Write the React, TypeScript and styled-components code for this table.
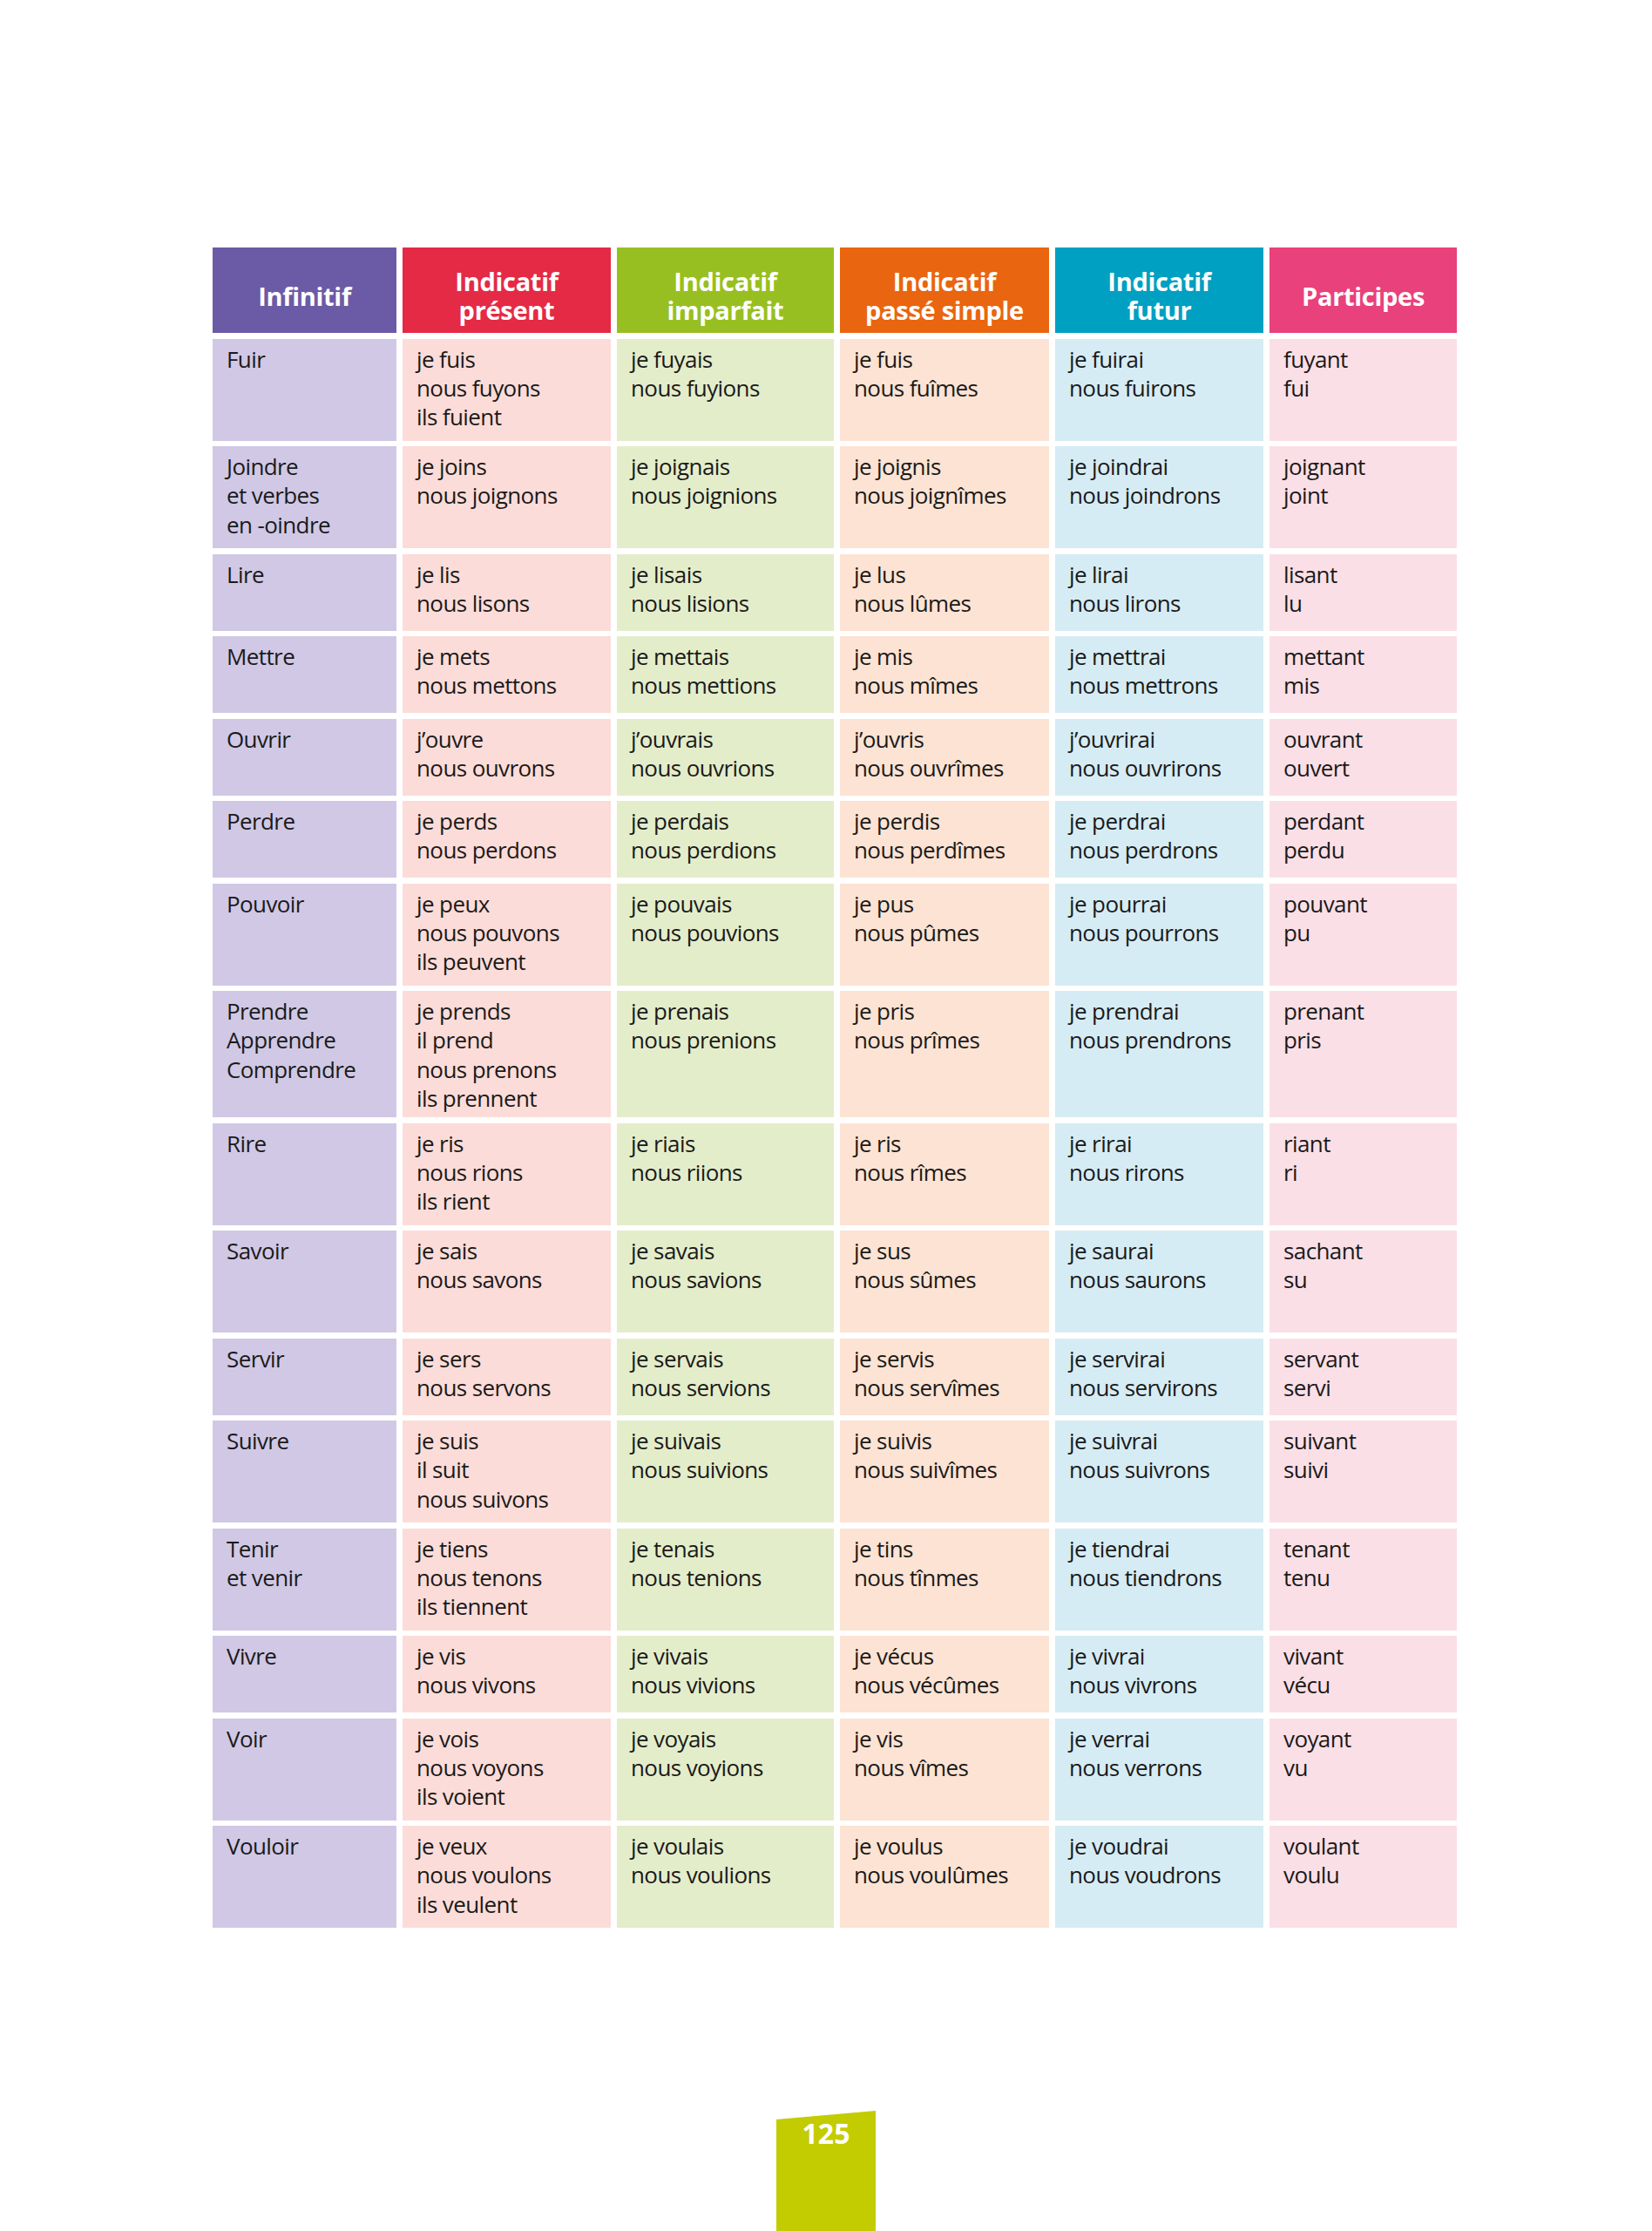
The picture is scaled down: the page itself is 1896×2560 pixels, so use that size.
import React from "react";
import styled, { createGlobalStyle } from "styled-components";

const GlobalStyle = createGlobalStyle`
  html, body {
    margin: 0;
    padding: 0;
    background: #ffffff;
  }
  body {
    font-family: "Open Sans", "Noto Sans", "Liberation Sans", sans-serif;
    color: #1a1a1a;
  }
`;

const COLS = "211px 239px 249px 240px 239px 215px";

const Page = styled.div`
  width: 1896px;
  height: 2560px;
  box-sizing: border-box;
  padding-top: 284px;
  display: flex;
  flex-direction: column;
  overflow: hidden;
`;

const Table = styled.div`
  margin-left: 244px;
  display: flex;
  flex-direction: column;
  gap: 6.5px;
  width: 1428px;
`;

const Row = styled.div<{ $h: number }>`
  display: grid;
  grid-template-columns: ${COLS};
  column-gap: 7px;
  height: ${(p) => p.$h}px;
`;

const HeadCell = styled.div<{ $bg: string }>`
  background: ${(p) => p.$bg};
  color: #ffffff;
  font-weight: 700;
  font-size: 29px;
  line-height: 33px;
  letter-spacing: -0.3px;
  text-align: center;
  display: flex;
  align-items: center;
  justify-content: center;
  padding-top: 12px;
  box-sizing: border-box;
  white-space: nowrap;
`;

const Cell = styled.div<{ $bg: string }>`
  background: ${(p) => p.$bg};
  font-size: 26px;
  line-height: 33.3px;
  letter-spacing: -0.6px;
  padding: 7px 8px 0 16px;
  box-sizing: border-box;
  color: #1a1a1a;
  overflow: hidden;
  white-space: nowrap;
`;

const Footer = styled.div`
  margin-top: auto;
  display: flex;
  justify-content: center;
`;

const PageTab = styled.div`
  width: 114px;
  height: 138px;
  background: #c3cc00;
  clip-path: polygon(0 10px, 100% 0, 100% 100%, 0 100%);
  color: #ffffff;
  font-weight: 700;
  font-size: 32px;
  line-height: 32px;
  text-align: center;
  padding-top: 10px;
  box-sizing: border-box;
`;

const headers = [
  { label: ["Infinitif"], bg: "#6b5ba6" },
  { label: ["Indicatif", "présent"], bg: "#e52a45" },
  { label: ["Indicatif", "imparfait"], bg: "#98bf21" },
  { label: ["Indicatif", "passé simple"], bg: "#e9650f" },
  { label: ["Indicatif", "futur"], bg: "#00a0c2" },
  { label: ["Participes"], bg: "#e9417b" },
];

const cellBg = ["#d0c8e5", "#fcdcd8", "#e4edca", "#fde3d3", "#d6ecf4", "#fbdfe6"];

type Verb = { h: number; cols: string[][] };

const verbs: Verb[] = [
  { h: 117, cols: [["Fuir"], ["je fuis", "nous fuyons", "ils fuient"], ["je fuyais", "nous fuyions"], ["je fuis", "nous fuîmes"], ["je fuirai", "nous fuirons"], ["fuyant", "fui"]] },
  { h: 117, cols: [["Joindre", "et verbes", "en -oindre"], ["je joins", "nous joignons"], ["je joignais", "nous joignions"], ["je joignis", "nous joignîmes"], ["je joindrai", "nous joindrons"], ["joignant", "joint"]] },
  { h: 88, cols: [["Lire"], ["je lis", "nous lisons"], ["je lisais", "nous lisions"], ["je lus", "nous lûmes"], ["je lirai", "nous lirons"], ["lisant", "lu"]] },
  { h: 88, cols: [["Mettre"], ["je mets", "nous mettons"], ["je mettais", "nous mettions"], ["je mis", "nous mîmes"], ["je mettrai", "nous mettrons"], ["mettant", "mis"]] },
  { h: 88, cols: [["Ouvrir"], ["j’ouvre", "nous ouvrons"], ["j’ouvrais", "nous ouvrions"], ["j’ouvris", "nous ouvrîmes"], ["j’ouvrirai", "nous ouvrirons"], ["ouvrant", "ouvert"]] },
  { h: 88, cols: [["Perdre"], ["je perds", "nous perdons"], ["je perdais", "nous perdions"], ["je perdis", "nous perdîmes"], ["je perdrai", "nous perdrons"], ["perdant", "perdu"]] },
  { h: 117, cols: [["Pouvoir"], ["je peux", "nous pouvons", "ils peuvent"], ["je pouvais", "nous pouvions"], ["je pus", "nous pûmes"], ["je pourrai", "nous pourrons"], ["pouvant", "pu"]] },
  { h: 145, cols: [["Prendre", "Apprendre", "Comprendre"], ["je prends", "il prend", "nous prenons", "ils prennent"], ["je prenais", "nous prenions"], ["je pris", "nous prîmes"], ["je prendrai", "nous prendrons"], ["prenant", "pris"]] },
  { h: 117, cols: [["Rire"], ["je ris", "nous rions", "ils rient"], ["je riais", "nous riions"], ["je ris", "nous rîmes"], ["je rirai", "nous rirons"], ["riant", "ri"]] },
  { h: 117, cols: [["Savoir"], ["je sais", "nous savons"], ["je savais", "nous savions"], ["je sus", "nous sûmes"], ["je saurai", "nous saurons"], ["sachant", "su"]] },
  { h: 88, cols: [["Servir"], ["je sers", "nous servons"], ["je servais", "nous servions"], ["je servis", "nous servîmes"], ["je servirai", "nous servirons"], ["servant", "servi"]] },
  { h: 117, cols: [["Suivre"], ["je suis", "il suit", "nous suivons"], ["je suivais", "nous suivions"], ["je suivis", "nous suivîmes"], ["je suivrai", "nous suivrons"], ["suivant", "suivi"]] },
  { h: 117, cols: [["Tenir", "et venir"], ["je tiens", "nous tenons", "ils tiennent"], ["je tenais", "nous tenions"], ["je tins", "nous tînmes"], ["je tiendrai", "nous tiendrons"], ["tenant", "tenu"]] },
  { h: 88, cols: [["Vivre"], ["je vis", "nous vivons"], ["je vivais", "nous vivions"], ["je vécus", "nous vécûmes"], ["je vivrai", "nous vivrons"], ["vivant", "vécu"]] },
  { h: 117, cols: [["Voir"], ["je vois", "nous voyons", "ils voient"], ["je voyais", "nous voyions"], ["je vis", "nous vîmes"], ["je verrai", "nous verrons"], ["voyant", "vu"]] },
  { h: 117, cols: [["Vouloir"], ["je veux", "nous voulons", "ils veulent"], ["je voulais", "nous voulions"], ["je voulus", "nous voulûmes"], ["je voudrai", "nous voudrons"], ["voulant", "voulu"]] },
];

function Lines({ items }: { items: string[] }) {
  return (
    <>
      {items.map((l, j) => (
        <React.Fragment key={j}>
          {j > 0 && <br />}
          {l}
        </React.Fragment>
      ))}
    </>
  );
}

export default function App() {
  return (
    <>
      <GlobalStyle />
      <Page>
        <Table>
          <Row $h={98}>
            {headers.map((h, i) => (
              <HeadCell key={i} $bg={h.bg}>
                <span>
                  <Lines items={h.label} />
                </span>
              </HeadCell>
            ))}
          </Row>
          {verbs.map((v, r) => (
            <Row key={r} $h={v.h}>
              {v.cols.map((lines, c) => (
                <Cell key={c} $bg={cellBg[c]}>
                  <Lines items={lines} />
                </Cell>
              ))}
            </Row>
          ))}
        </Table>
        <Footer>
          <PageTab>125</PageTab>
        </Footer>
      </Page>
    </>
  );
}
